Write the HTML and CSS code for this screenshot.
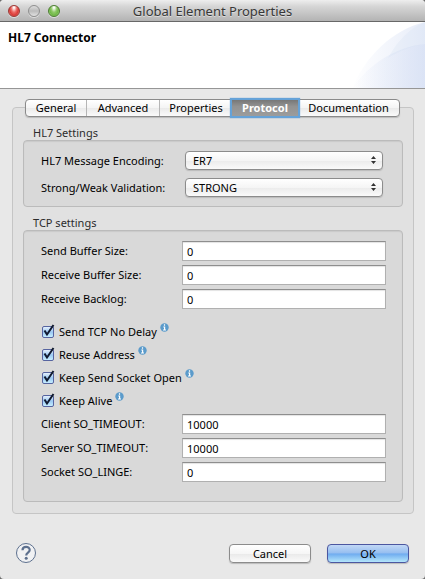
FILE: index.html
```html
<!DOCTYPE html>
<html lang="en">
<head>
<meta charset="utf-8">
<title>Global Element Properties</title>
<meta name="viewport" content="width=device-width, initial-scale=1">
<link rel="stylesheet" href="styles.css">
</head>
<body>
<svg class="defs" width="0" height="0" aria-hidden="true">
  <symbol id="info" viewBox="0 0 9 9">
    <circle cx="4.500" cy="4.500" r="4.200" fill="#5b9bcb"/>
    <path d="M4.500 1.300v1.400M3.300 4h1.300v3M3 7h3" fill="none" stroke="#fff" stroke-width="1.200"/>
  </symbol>
</svg>
<div class="window">
  <header class="titlebar">
    <div class="lights">
      <button class="light red" aria-label="Close"></button>
      <button class="light gray" aria-label="Minimize"></button>
      <button class="light green" aria-label="Zoom"></button>
    </div>
    <h1 class="title">Global Element Properties</h1>
  </header>
  <div class="banner">
    <h2 class="heading">HL7 Connector</h2>
    <svg class="swoosh" viewBox="0 0 78 66" aria-hidden="true">
      <defs>
        <linearGradient id="fade" x1="0" x2="1" y1="0" y2="0">
          <stop offset="0" stop-color="#cfdaf2" stop-opacity="0"/>
          <stop offset="1" stop-color="#cfdaf2" stop-opacity=".5"/>
        </linearGradient>
      </defs>
      <path d="M5 66C19 34 45 8 78 0V66Z" fill="url(#fade)"/>
      <path d="M5 66C22 43 47 25 78 22V66Z" fill="url(#fade)"/>
      <path d="M41 36C50 20 61 7 78 0V22C64 24 52 29 41 36Z" fill="#cfdaf2" opacity=".2"/>
    </svg>
  </div>
  <main class="content">
    <div class="tabs" role="tablist">
      <button class="tab" role="tab">General</button>
      <button class="tab" role="tab">Advanced</button>
      <button class="tab" role="tab">Properties</button>
      <button class="tab active" role="tab" aria-selected="true">Protocol</button>
      <button class="tab" role="tab">Documentation</button>
    </div>
    <form class="panel" id="settings">
      <fieldset class="group">
        <legend class="legend">HL7 Settings</legend>
        <div class="box selects">
          <div class="row">
            <label class="label" for="encoding">HL7 Message Encoding:</label>
            <span class="popup"><select id="encoding"><option>ER7</option></select>
              <svg class="arrows" viewBox="0 0 5 8" aria-hidden="true"><path d="M0 3L2.500 0L5 3ZM0 5H5L2.500 8Z" fill="#333"/></svg></span>
          </div>
          <div class="row">
            <label class="label" for="validation">Strong/Weak Validation:</label>
            <span class="popup"><select id="validation"><option>STRONG</option></select>
              <svg class="arrows" viewBox="0 0 5 8" aria-hidden="true"><path d="M0 3L2.500 0L5 3ZM0 5H5L2.500 8Z" fill="#333"/></svg></span>
          </div>
        </div>
      </fieldset>
      <fieldset class="group">
        <legend class="legend">TCP settings</legend>
        <div class="box fields">
          <div class="row"><label class="label" for="send">Send Buffer Size:</label><input class="text" id="send" value="0"></div>
          <div class="row"><label class="label" for="receive">Receive Buffer Size:</label><input class="text" id="receive" value="0"></div>
          <div class="row"><label class="label" for="backlog">Receive Backlog:</label><input class="text" id="backlog" value="0"></div>
          <div class="checks">
            <div class="check"><span class="tick"><input type="checkbox" id="nodelay" checked><svg viewBox="0 0 14 15" aria-hidden="true"><path d="M3.500 7.500L6 11.500L12.500 2" /></svg></span><label for="nodelay">Send TCP No Delay</label><svg class="info" aria-hidden="true"><use href="#info"/></svg></div>
            <div class="check"><span class="tick"><input type="checkbox" id="reuse" checked><svg viewBox="0 0 14 15" aria-hidden="true"><path d="M3.500 7.500L6 11.500L12.500 2" /></svg></span><label for="reuse">Reuse Address</label><svg class="info" aria-hidden="true"><use href="#info"/></svg></div>
            <div class="check"><span class="tick"><input type="checkbox" id="keepopen" checked><svg viewBox="0 0 14 15" aria-hidden="true"><path d="M3.500 7.500L6 11.500L12.500 2" /></svg></span><label for="keepopen">Keep Send Socket Open</label><svg class="info" aria-hidden="true"><use href="#info"/></svg></div>
            <div class="check"><span class="tick"><input type="checkbox" id="alive" checked><svg viewBox="0 0 14 15" aria-hidden="true"><path d="M3.500 7.500L6 11.500L12.500 2" /></svg></span><label for="alive">Keep Alive</label><svg class="info" aria-hidden="true"><use href="#info"/></svg></div>
          </div>
          <div class="row"><label class="label" for="client">Client SO_TIMEOUT:</label><input class="text" id="client" value="10000"></div>
          <div class="row"><label class="label" for="server">Server SO_TIMEOUT:</label><input class="text" id="server" value="10000"></div>
          <div class="row"><label class="label" for="linger">Socket SO_LINGE:</label><input class="text" id="linger" value="0"></div>
        </div>
      </fieldset>
    </form>
  </main>
  <footer class="footer">
    <button class="help" aria-label="Help">
      <svg viewBox="0 0 22 22" aria-hidden="true">
        <circle cx="11" cy="11" r="9.500" fill="#f0f1f3" stroke="#5d708e"/>
        <path d="M7.500 8.300C7.500 3.900 14.700 3.900 14.700 8C14.700 10.700 11.200 10.500 11.200 13.400" fill="none" stroke="#5d708e" stroke-width="2.200"/>
        <circle cx="11.200" cy="16.200" r="1.500" fill="#5d708e"/>
      </svg>
    </button>
    <button class="push">Cancel</button>
    <button class="push primary" form="settings">OK</button>
  </footer>
</div>
</body>
</html>
```
FILE: styles.css
```css
* { box-sizing: border-box; }
body {
  margin: 0;
  background: #6b6b6b;
  font: 11px/16px "Noto Sans", "Open Sans", sans-serif;
  color: #000;
}
button, input, select { font: inherit; color: inherit; margin: 0; padding: 0; }
h1, h2, fieldset, legend { margin: 0; padding: 0; border: 0; }
.defs { position: absolute; }
.window {
  display: flex;
  flex-direction: column;
  min-height: 100vh;
  background: #e8e8e8;
  border-radius: 4px;
  overflow: hidden;
}
.titlebar {
  display: grid;
  grid-template-columns: 1fr auto 1fr;
  align-items: center;
  height: 22px;
  padding: 0 8px;
  background: linear-gradient(#eee, #d6d6d6 30%, #b3b3b3);
  border-bottom: 1px solid #686868;
}
.title { font-size: 13px; line-height: 20px; font-weight: 400; color: #383838; text-shadow: 0 1px #ddd; }
.lights { display: flex; gap: 8px; }
.light { width: 12px; height: 12px; border: 1px solid #888; border-radius: 50%; box-shadow: 0 1px #ddd; }
.red { border-color: #9b3835; background: radial-gradient(ellipse at 50% 15%, #fff 5%, #eb6b65 40%, #d93a37 65%, #f7aaa0); }
.gray { border-color: #8f8f8f; background: linear-gradient(#ddd, #bbb 50%, #e2e2e2); }
.green { border-color: #4c7d32; background: radial-gradient(ellipse at 50% 15%, #fff 5%, #8fc968 40%, #70b846 65%, #d2f7b0); }
.banner {
  display: flex;
  justify-content: space-between;
  height: 67px;
  background: #fff;
  border-bottom: 1px solid #969696;
}
.heading { padding: 8px; font-size: 12px; line-height: 16px; font-weight: 700; }
.swoosh { width: 78px; height: 66px; }
.content { padding: 10px 11px 0 12px; }
.tabs {
  position: relative;
  display: flex;
  margin: 0 14px -10px 13px;
  height: 18px;
  border: 1px solid #8a8a8a;
  border-radius: 4px;
  background: linear-gradient(#fff, #f4f4f4 50%, #eaeaea 51%, #fafafa);
  box-shadow: 0 1px 1px #bbb;
}
.tab { flex: 72 1 0; border: 0; background: none; line-height: 16px; white-space: nowrap; }
.tab + .tab { border-left: 1px solid #b5b5b5; }
.tab:first-child { flex-grow: 60; }
.tab:last-child { flex-grow: 101; border-left: 0; }
.tab.active {
  flex-grow: 66;
  border: 0;
  background: linear-gradient(#777, #929292 40%, #9c9c9c);
  color: #fff;
  font-weight: 700;
  box-shadow: 0 0 1px 2px #65a2d8;
}
.panel {
  padding: 17px 10px 11px;
  border: 1px solid #c5c5c5;
  border-radius: 4px;
  background: #e1e1e1;
}
.group + .group { margin-top: 8px; }
.legend { padding: 0 10px; line-height: 15px; color: #2c2c2c; }
.box {
  display: flex;
  flex-direction: column;
  border: 1px solid #bbb;
  border-radius: 4px;
  background: #d9d9d9;
  box-shadow: inset 0 1px 1px #c9c9c9;
}
.selects { gap: 8px; padding: 10px 19px 9px 17px; }
.fields { gap: 4px; padding: 10px 16px 19px 17px; }
.row { display: flex; align-items: center; }
.label { flex: 0 0 141px; white-space: nowrap; }
.selects .label { flex-basis: 144px; }
.popup { position: relative; flex: 1; display: flex; }
select {
  appearance: none;
  width: 100%;
  height: 19px;
  padding: 0 7px;
  border: 1px solid #8c8c8c;
  border-radius: 4px;
  background: linear-gradient(#fff, #f5f5f5 50%, #ebebeb 51%, #fafafa);
  box-shadow: 0 1px 1px #bbb;
}
.arrows { position: absolute; right: 7px; top: 5px; width: 5px; height: 8px; }
.text {
  flex: 1;
  min-width: 0;
  height: 20px;
  padding: 0 4px;
  border: 1px solid #b0b0b0;
  border-top-color: #8e8e8e;
  border-radius: 0;
  background: #fff;
  box-shadow: inset 0 1px 1px #e3e3e3;
}
.checks { display: flex; flex-direction: column; gap: 7px; margin: 11px 0 1px; padding-left: 1px; }
.check { display: flex; align-items: center; height: 16px; }
.check label { margin: 0 3px 0 5px; }
.tick { position: relative; display: flex; }
.tick input {
  appearance: none;
  width: 12px;
  height: 12px;
  border: 1px solid #5664a0;
  border-radius: 2px;
  background: linear-gradient(#e5f0fc, #9ac8f3 50%, #c6eeff);
}
.tick svg { position: absolute; left: -1px; bottom: 0; width: 14px; height: 15px; pointer-events: none; }
.tick path { fill: none; stroke: #101a30; stroke-width: 2; }
.info { width: 9px; height: 9px; align-self: flex-start; margin-top: -1px; }
.footer { display: flex; align-items: center; gap: 16px; margin-top: auto; padding: 0 16px 15px 15px; }
.help { width: 22px; height: 22px; margin-right: auto; border: 0; background: none; }
.help svg { display: block; }
.push {
  width: 82px;
  height: 19px;
  border: 1px solid #8c8c8c;
  border-radius: 4px;
  background: linear-gradient(#fff, #f6f6f6 50%, #e9e9e9 51%, #fafafa);
  box-shadow: 0 1px 1px #bbb;
  line-height: 17px;
}
.primary { border-color: #4c57a0; background: linear-gradient(#c2d8f6, #94bdf0 49%, #6daaef 51%, #b4e6fb); }
```
